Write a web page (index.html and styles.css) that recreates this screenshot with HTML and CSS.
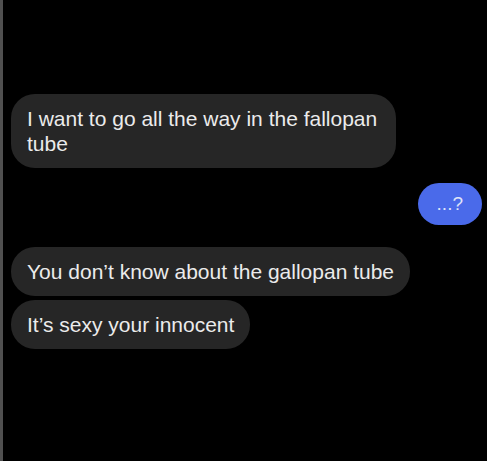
FILE: index.html
```html
<!DOCTYPE html>
<html lang="en">
<head>
<meta charset="utf-8">
<title>Messages</title>
<link rel="stylesheet" href="styles.css">
</head>
<body>
<div class="screen">
  <div class="edge"></div>
  <div class="thread">
    <div class="bubble in first">I want to go all the way in the fallopan tube</div>
    <div class="bubble out">...?</div>
    <div class="bubble in third">You don’t know about the gallopan tube</div>
    <div class="bubble in fourth">It’s sexy your innocent</div>
  </div>
</div>
</body>
</html>
```

FILE: styles.css
```css
html, body {
  margin: 0;
  padding: 0;
  background: #000;
}
.screen {
  display: flex;
  width: 487px;
  height: 461px;
  overflow: hidden;
}
.edge {
  width: 3px;
  flex: none;
  background: #505050;
}
.thread {
  flex: 1;
  display: flex;
  flex-direction: column;
  align-items: flex-start;
  padding: 94px 5px 0 8px;
  font-family: "Liberation Sans", Arial, sans-serif;
  font-size: 21px;
  line-height: 25px;
}
.bubble {
  box-sizing: border-box;
  border-radius: 24px;
  padding: 12px 16px;
  max-width: 385px;
}
.in {
  background: #262626;
  color: #ebebeb;
}
.out {
  align-self: flex-end;
  margin-top: 15px;
  background: #4a6aea;
  color: #dfe3f8;
  font-size: 19px;
  line-height: 24px;
  padding: 9px 19px;
  border-radius: 21px;
}
.third {
  margin-top: 22px;
  max-width: 410px;
}
.fourth {
  margin-top: 4px;
}
```
